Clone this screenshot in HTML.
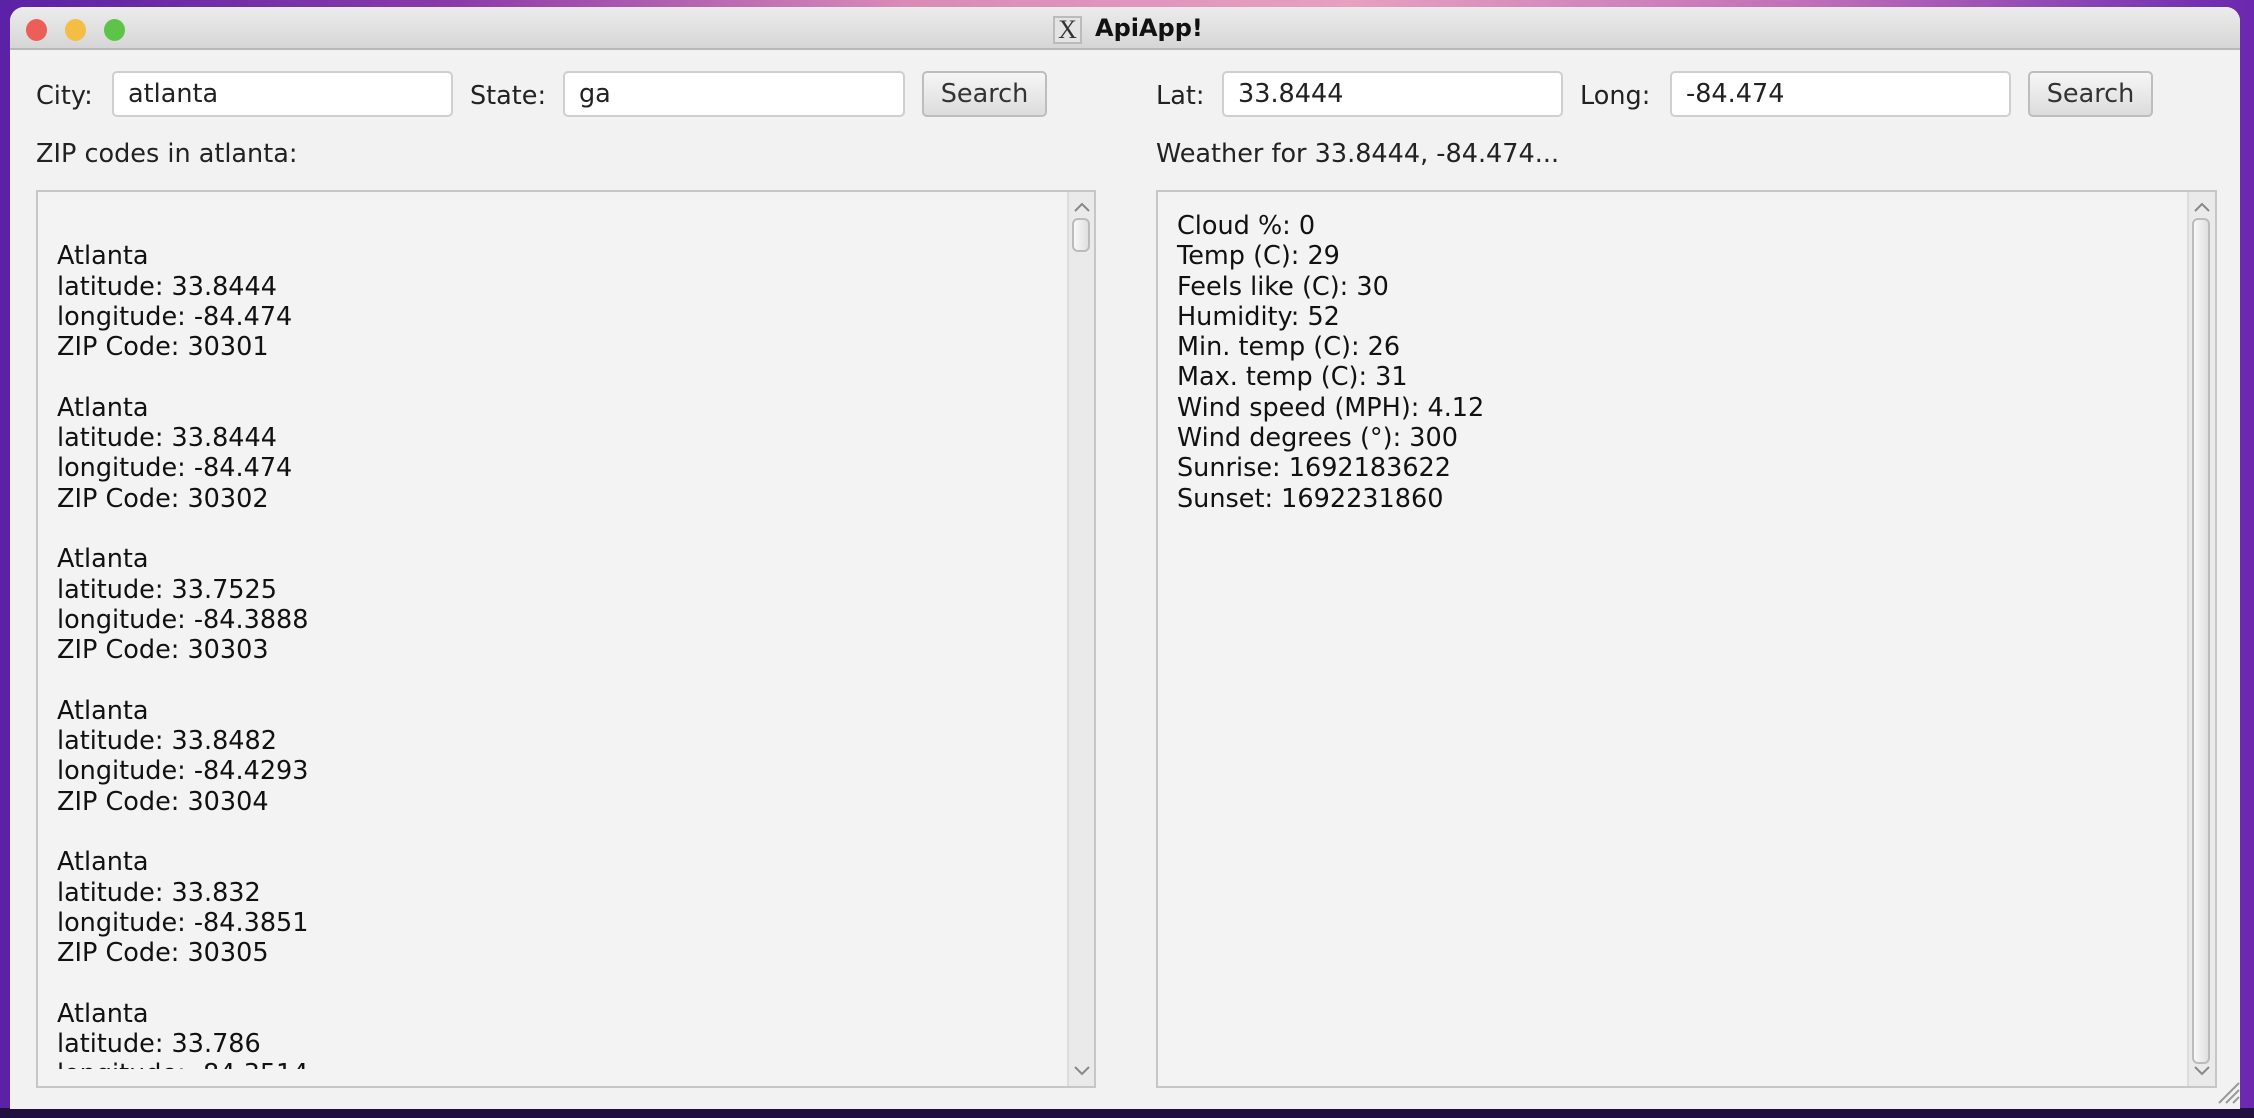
<!DOCTYPE html>
<html><head><meta charset="utf-8"><style>
*{margin:0;padding:0;box-sizing:border-box}
body{width:2254px;height:1118px;overflow:hidden;position:relative;background:linear-gradient(90deg,#5a22a6 0%,#8a3aa8 20%,#d98ab8 40%,#e6a0c0 60%,#c070b8 80%,#6a28b0 100%);font-family:"DejaVu Sans","Liberation Sans",sans-serif;font-size:25.5px;color:#222}
.bottombg{position:absolute;left:0;top:1108px;width:2254px;height:10px;background:#201040}
.win{position:absolute;left:10px;top:7px;width:2230px;height:1102px;background:#f2f2f2;border-radius:14px 14px 0 0;overflow:hidden}
.title{position:absolute;left:0;top:0;width:100%;height:43px;background:linear-gradient(#ececec,#d6d6d6);border-bottom:2px solid #b8b8b8}
.tl{position:absolute;top:12px;width:21px;height:22px;border-radius:50%}
.ttxt{position:absolute;left:1085px;top:7px;font-weight:bold;font-size:24px;color:#111}
.xic{position:absolute;left:1043px;top:9px;width:29px;height:28px;border:2px solid #bbb;background:#e4e4e4;font-family:"Liberation Serif",serif;font-size:26px;line-height:24px;text-align:center;color:#333}
.lbl{position:absolute;line-height:46px}
.fld{position:absolute;top:64px;height:46px;background:#fff;border:2px solid #cfcfcf;border-radius:5px;padding-left:14px;line-height:42px}
.btn{position:absolute;top:64px;height:46px;width:125px;background:linear-gradient(#f6f6f6,#dcdcdc);border:2px solid #bdbdbd;border-radius:5px;text-align:center;line-height:42px;color:#333}
.box{position:absolute;top:183px;height:898px;border:2px solid #c6c6c6;background:#f3f3f3;overflow:hidden}
.txt{position:absolute;top:19px;line-height:30.3px;white-space:pre;color:#111}
.sb{position:absolute;top:0;width:28px;height:100%;background:#eaeaea;border-left:2px solid #dcdcdc}
.th{position:absolute;left:3px;width:18px;border:2px solid #bbb;border-radius:6px;background:linear-gradient(90deg,#f8f8f8,#e0e0e0)}
.ar{position:absolute;left:3px}
</style></head><body>
<div class="bottombg"></div>
<div class="win">
 <div class="title">
  <div class="tl" style="left:16px;background:#ec5f57"></div>
  <div class="tl" style="left:55px;background:#f4bd44"></div>
  <div class="tl" style="left:94px;background:#5dc449"></div>
  <div class="xic">X</div>
  <div class="ttxt">ApiApp!</div>
 </div>
 <div class="lbl" style="left:26px;top:66px">City:</div>
 <div class="fld" style="left:102px;width:341px">atlanta</div>
 <div class="lbl" style="left:460px;top:66px">State:</div>
 <div class="fld" style="left:553px;width:342px">ga</div>
 <div class="btn" style="left:912px">Search</div>
 <div class="lbl" style="left:1146px;top:66px">Lat:</div>
 <div class="fld" style="left:1212px;width:341px">33.8444</div>
 <div class="lbl" style="left:1570px;top:66px">Long:</div>
 <div class="fld" style="left:1660px;width:341px">-84.474</div>
 <div class="btn" style="left:2018px">Search</div>
 <div class="lbl" style="left:26px;top:124px">ZIP codes in atlanta:</div>
 <div class="lbl" style="left:1146px;top:124px">Weather for 33.8444, -84.474...</div>

 <div class="box" style="left:26px;width:1060px">
  <div class="txt" style="left:19px;height:858px;overflow:hidden;top:19px">
Atlanta
latitude: 33.8444
longitude: -84.474
ZIP Code: 30301

Atlanta
latitude: 33.8444
longitude: -84.474
ZIP Code: 30302

Atlanta
latitude: 33.7525
longitude: -84.3888
ZIP Code: 30303

Atlanta
latitude: 33.8482
longitude: -84.4293
ZIP Code: 30304

Atlanta
latitude: 33.832
longitude: -84.3851
ZIP Code: 30305

Atlanta
latitude: 33.786
longitude: -84.3514</div>
  <div class="sb" style="left:1029px">
   <svg class="ar" style="top:8px" width="20" height="14"><path d="M3 11L10 4L17 11" stroke="#888" stroke-width="2" fill="none"/></svg>
   <div class="th" style="top:26px;height:34px"></div>
   <svg class="ar" style="top:872px" width="20" height="14"><path d="M3 3L10 10L17 3" stroke="#888" stroke-width="2" fill="none"/></svg>
  </div>
 </div>

 <div class="box" style="left:1146px;width:1061px">
  <div class="txt" style="left:19px">Cloud %: 0
Temp (C): 29
Feels like (C): 30
Humidity: 52
Min. temp (C): 26
Max. temp (C): 31
Wind speed (MPH): 4.12
Wind degrees (°): 300
Sunrise: 1692183622
Sunset: 1692231860</div>
  <div class="sb" style="left:1029px">
   <svg class="ar" style="top:8px" width="20" height="14"><path d="M3 11L10 4L17 11" stroke="#888" stroke-width="2" fill="none"/></svg>
   <div class="th" style="top:26px;height:846px"></div>
   <svg class="ar" style="top:872px" width="20" height="14"><path d="M3 3L10 10L17 3" stroke="#888" stroke-width="2" fill="none"/></svg>
  </div>
 </div>
 <svg style="position:absolute;left:2205px;top:1070px" width="26" height="28"><path d="M4 26L24 6M11 26L24 13M18 26L24 20" stroke="#999" stroke-width="2"/></svg>
</div>
</body></html>
